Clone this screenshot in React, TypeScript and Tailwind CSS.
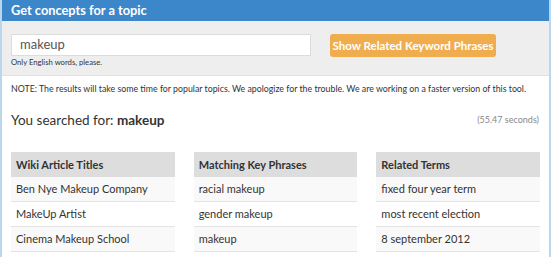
export default function App() {
  const rows = [
    ['Ben Nye Makeup Company', 'racial makeup', 'fixed four year term'],
    ['MakeUp Artist', 'gender makeup', 'most recent election'],
    ['Cinema Makeup School', 'makeup', '8 september 2012'],
    ['', '', ''],
  ]
  const heads = ['Wiki Article Titles', 'Matching Key Phrases', 'Related Terms']

  return (
    <div className="h-[257px] w-[553px] overflow-hidden bg-white font-['Lato',sans-serif] text-[#333]">
      <div className="h-[300px] w-[551px] border-x-2 border-[#bcd6ec]">
        <div className="flex h-[21px] items-center bg-[#3b87c9] px-[9px] text-[12.8px] font-bold text-white">
          Get concepts for a topic
        </div>

        <div className="flex h-[55px] items-start gap-[19px] border-b border-[#e2e2e2] bg-[#eeeeee] px-[9px] pt-[13px]">
          <div className="flex flex-col">
            <div className="flex h-[22px] w-[300px] items-center border border-[#dcdcdc] bg-white px-[8px] text-[13px] text-[#555]">
              makeup
            </div>
            <div className="mt-[1px] text-[7.7px] leading-[10px] text-[#333]">Only English words, please.</div>
          </div>
          <button className="h-[23px] w-[166px] rounded-[3px] bg-[#f0ad4e] text-[11.5px] font-bold text-white">
            Show Related Keyword Phrases
          </button>
        </div>

        <div className="px-[9px]">
          <div className="pt-[7px] text-[8.8px] leading-[12px]">
            NOTE: The results will take some time for popular topics. We apologize for the trouble. We are working on a faster version of this tool.
          </div>
          <div className="mt-[15px] flex items-center justify-between">
            <div className="text-[13.5px]">
              You searched for: <span className="font-bold">makeup</span>
            </div>
            <div className="pr-[1px] text-[9px] text-[#888]">(55.47 seconds)</div>
          </div>

          <div className="mt-[22px] grid grid-cols-3 gap-[19px]">
            {heads.map((h, c) => (
              <div key={h} className="flex flex-col">
                <div className="flex h-[25px] items-center bg-[#dddddd] px-[5px] text-[11px] font-bold">{h}</div>
                {rows.map((r, i) => (
                  <div
                    key={i}
                    className={
                      'flex h-[25px] items-center border-b border-[#e4e4e4] px-[5px] text-[11px] ' +
                      (i % 2 === 0 ? 'bg-[#f9f9f9]' : 'bg-white')
                    }
                  >
                    {r[c]}
                  </div>
                ))}
              </div>
            ))}
          </div>
        </div>
      </div>
    </div>
  )
}
